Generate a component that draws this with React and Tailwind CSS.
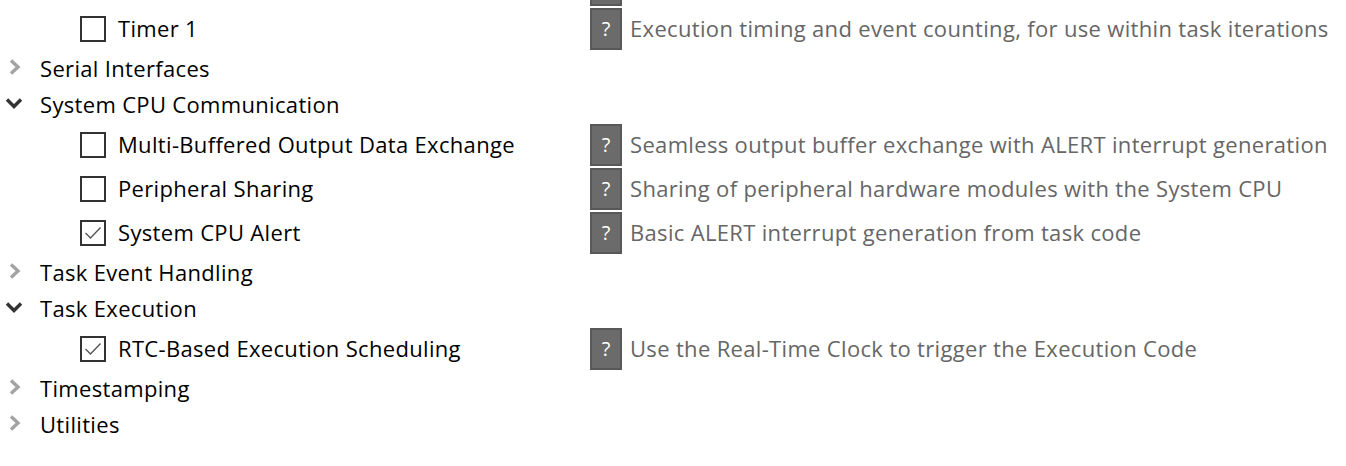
const ROWS = [
  { type: "item", label: "Timer 1", desc: "Execution timing and event counting, for use within task iterations", checked: false },
  { type: "group", label: "Serial Interfaces", open: false },
  { type: "group", label: "System CPU Communication", open: true },
  { type: "item", label: "Multi-Buffered Output Data Exchange", desc: "Seamless output buffer exchange with ALERT interrupt generation", checked: false },
  { type: "item", label: "Peripheral Sharing", desc: "Sharing of peripheral hardware modules with the System CPU", checked: false },
  { type: "item", label: "System CPU Alert", desc: "Basic ALERT interrupt generation from task code", checked: true },
  { type: "group", label: "Task Event Handling", open: false },
  { type: "group", label: "Task Execution", open: true },
  { type: "item", label: "RTC-Based Execution Scheduling", desc: "Use the Real-Time Clock to trigger the Execution Code", checked: true },
  { type: "group", label: "Timestamping", open: false },
  { type: "group", label: "Utilities", open: false },
];

function Chevron({ open }) {
  return open ? (
    <svg width="18" height="12" viewBox="0 0 18 12" className="block ml-[5px] mb-[4px]">
      <polyline points="2,2.5 9,9.5 16,2.5" fill="none" stroke="#333" strokeWidth="3.4" />
    </svg>
  ) : (
    <svg width="14" height="16" viewBox="0 0 14 16" className="block ml-[8px] mb-[5px]">
      <polyline points="3,1.5 10,8 3,14.5" fill="none" stroke="#a3a3a3" strokeWidth="3.4" />
    </svg>
  );
}

function Checkbox({ checked }) {
  return (
    <div className="w-[26px] h-[26px] border-2 border-[#333] bg-white flex items-center justify-center shrink-0">
      {checked && (
        <svg width="18" height="14" viewBox="0 0 18 14">
          <polyline points="1.5,7 6.5,12 16.5,1.5" fill="none" stroke="#555" strokeWidth="1.4" />
        </svg>
      )}
    </div>
  );
}

export default function App() {
  return (
    <div
      className="h-[466px] w-[1346px] overflow-hidden bg-white text-[22px] tracking-[0.33px]"
      style={{ fontFamily: '"Open Sans", "Noto Sans", sans-serif' }}
    >
      {/* tail of the row scrolled above */}
      <div className="h-[7px] pl-[590px]">
        <div className="w-[32px] h-[6px] bg-[#6b6b6b] border-2 border-t-0 border-[#585858]" />
      </div>
      {ROWS.map((r, i) =>
        r.type === "group" ? (
          <div key={i} className="h-[36px] flex items-center">
            <div className="w-[40px] shrink-0 flex items-center">
              <Chevron open={r.open} />
            </div>
            <span className="text-black pb-[2px]">{r.label}</span>
          </div>
        ) : (
          <div key={i} className="h-[44px] flex items-center">
            <div className="w-[590px] flex items-center pl-[80px] gap-[12px]">
              <Checkbox checked={r.checked} />
              <span className="text-black pb-[2px]">{r.label}</span>
            </div>
            <div className="w-[32px] h-[42px] bg-[#6b6b6b] border-2 border-[#585858] flex items-center justify-center text-white text-[20px] tracking-normal">
              ?
            </div>
            <span className="ml-[8px] text-[#666] pb-[2px]">{r.desc}</span>
          </div>
        )
      )}
    </div>
  );
}
